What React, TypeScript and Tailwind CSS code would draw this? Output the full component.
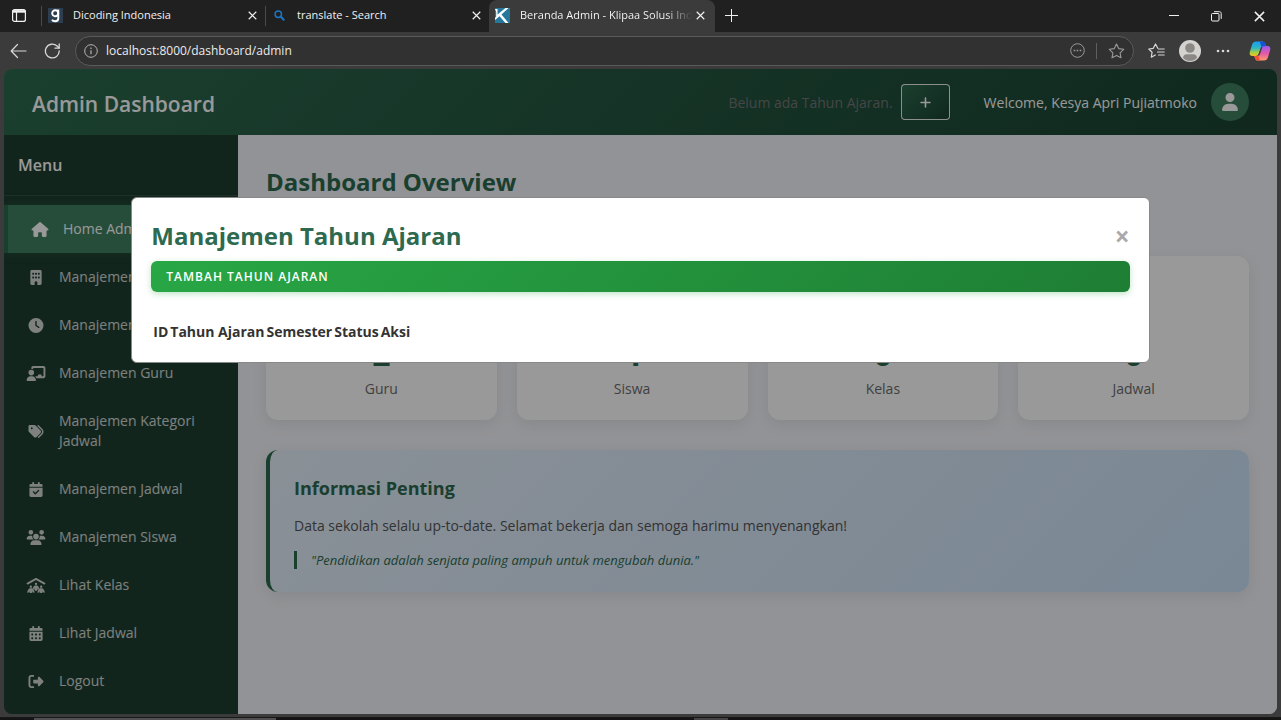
import * as React from "react";
import {
  FaBuilding,
  FaCalendarCheck,
  FaCalendarDays,
  FaChalkboardUser,
  FaClock,
  FaHouse,
  FaPeopleRoof,
  FaPlus,
  FaRightFromBracket,
  FaSchool,
  FaTags,
  FaUser,
  FaUserGraduate,
  FaUsers,
} from "react-icons/fa6";

const navItems = [
  { label: "Home Admin", icon: FaHouse, active: true },
  { label: "Manajemen Kelas", icon: FaBuilding },
  { label: "Manajemen Jam", icon: FaClock },
  { label: "Manajemen Guru", icon: FaChalkboardUser },
  { label: "Manajemen Kategori Jadwal", icon: FaTags },
  { label: "Manajemen Jadwal", icon: FaCalendarCheck },
  { label: "Manajemen Siswa", icon: FaUsers },
  { label: "Lihat Kelas", icon: FaPeopleRoof },
  { label: "Lihat Jadwal", icon: FaCalendarDays },
  { label: "Logout", icon: FaRightFromBracket },
];

const stats = [
  { label: "Guru", value: 2, icon: FaChalkboardUser },
  { label: "Siswa", value: 4, icon: FaUserGraduate },
  { label: "Kelas", value: 0, icon: FaSchool },
  { label: "Jadwal", value: 0, icon: FaCalendarDays },
];

const columns = ["ID", "Tahun Ajaran", "Semester", "Status", "Aksi"];

function CloseGlyph({ size = 9 }: { size?: number }) {
  return (
    <svg width={size} height={size} viewBox="0 0 10 10" fill="none" stroke="currentColor" strokeWidth="1.3">
      <path d="M.8.8l8.4 8.4M9.2.8L.8 9.2" />
    </svg>
  );
}

function DicodingIcon() {
  return (
    <svg width="15" height="15" viewBox="0 0 15 15" fill="none">
      <rect width="15" height="15" fill="#2d3e50" />
      <circle cx="7.200" cy="5.300" r="3" stroke="#fff" strokeWidth="1.900" />
      <path d="M4 11.800c.6 1 1.700 1.500 3.200 1.500 2 0 3.100-1 3.100-3V1.400" stroke="#fff" strokeWidth="1.900" />
    </svg>
  );
}

function SearchIcon() {
  return (
    <svg width="15" height="15" viewBox="0 0 15 15" fill="none" stroke="#1976c5" strokeLinecap="round">
      <circle cx="6.300" cy="6.200" r="3.200" strokeWidth="1.500" />
      <path d="M8.900 8.800l2.800 2.900" strokeWidth="2" />
    </svg>
  );
}

function KlipaaIcon() {
  return (
    <svg width="15" height="15" viewBox="0 0 15 15">
      <rect width="15" height="15" fill="#25789c" />
      <path d="M0 1h2.500v5.500L10.500 0h3L6.500 6.500l7 8.500h-3L4.500 8.300 0 12v-2l1.200-1.500V4z" fill="#fff" />
    </svg>
  );
}

function CopilotIcon() {
  return (
    <svg width="22" height="20" viewBox="0 0 22 20">
      <defs>
        <linearGradient id="copilotLeft" x1="0" y1="0" x2="0" y2="1">
          <stop offset="0" stopColor="#1b9df0" />
          <stop offset=".45" stopColor="#2fb7c4" />
          <stop offset=".75" stopColor="#a8cf45" />
          <stop offset="1" stopColor="#f5c51c" />
        </linearGradient>
        <linearGradient id="copilotRight" x1="0" y1="0" x2="0" y2="1">
          <stop offset="0" stopColor="#9b5cf0" />
          <stop offset=".5" stopColor="#e258a8" />
          <stop offset="1" stopColor="#ff9a6b" />
        </linearGradient>
      </defs>
      <path d="M13 .5c1.700 0 2.700 1 3.200 2.600l.7 2.200h-2.600c-1.600 0-2.300.8-2.700 2.200L9.800 12.600c-.5 1.600-1.500 2.500-3.200 2.500H3.400C1 15.100.2 13.200.8 11L3 3.700C3.700 1.500 5 .5 7 .5z" fill="url(#copilotLeft)" />
      <path d="M9 19.500c-1.700 0-2.600-1-3.100-2.600l-.6-1.800h1.900c1.900 0 2.800-1 3.200-2.500l1.700-5.100c.5-1.600 1.500-2.400 3.200-2.400h3.200c2.400 0 3.300 1.800 2.700 4l-2.200 7.200c-.7 2.200-2 3.200-4 3.200z" fill="url(#copilotRight)" />
      <path d="M13 .5c1.700 0 2.700 1 3.200 2.600l.7 2.200h-2.600c-.8 0-1.400.2-1.900.7L10.800.5z" fill="#1a4fd8" />
      <path d="M9 19.500c-1.700 0-2.600-1-3.100-2.600l-.6-1.800h1.900c.9 0 1.600-.2 2.100-.6l1.600 5z" fill="#f4512f" />
      <path d="M9.500 13.500l2.700-7.500h1.200l-2.600 7.500c-.3.900-.8 1.400-1.600 1.600z" fill="#3b3b3b" />
    </svg>
  );
}

function BrowserTab({
  title,
  icon,
  active = false,
}: {
  title: string;
  icon: React.ReactNode;
  active?: boolean;
}) {
  return (
    <div
      className={
        active
          ? "flex w-[226px] items-center rounded-t-lg bg-[#3b3b3b] pr-2.5 pb-0.5 pl-1.5"
          : "my-1.5 flex w-56 items-center border-l border-[#4a4a4a] pr-2 pb-0.5 pl-1.5"
      }
    >
      {icon}
      <span
        className={
          active
            ? "ml-2.5 flex-1 overflow-hidden bg-linear-to-r from-white from-85% to-transparent bg-clip-text text-[11px] whitespace-nowrap text-transparent"
            : "ml-2.5 flex-1 overflow-hidden text-[11px] whitespace-nowrap"
        }
      >
        {title}
      </span>
      <button aria-label="Close tab" className={active ? "ml-1" : "ml-2"}>
        <CloseGlyph />
      </button>
    </div>
  );
}

function TabStrip() {
  return (
    <div className="flex h-8 items-stretch bg-[#202020] text-[#f0f0f0]">
      <button aria-label="Tab actions" className="flex w-[41px] items-center pb-0.5 pl-3">
        <svg width="14" height="13" viewBox="0 0 14 13" fill="none" stroke="currentColor" strokeWidth="1.200">
          <rect x=".6" y=".6" width="12.800" height="11.800" rx="2" />
          <path d="M.6 2.400h12.800" strokeWidth="2.600" />
          <path d="M4.500 3v9.400" />
        </svg>
      </button>
      <BrowserTab title="Dicoding Indonesia" icon={<DicodingIcon />} />
      <BrowserTab title="translate - Search" icon={<SearchIcon />} />
      <BrowserTab title="Beranda Admin - Klipaa Solusi Ind" icon={<KlipaaIcon />} active />
      <button aria-label="New tab" className="px-2.5 pb-0.5">
        <svg width="13" height="13" viewBox="0 0 13 13" stroke="currentColor">
          <path d="M6.500 0v13M0 6.500h13" />
        </svg>
      </button>
      <div className="ml-auto flex items-center gap-8 pr-4">
        <button aria-label="Minimize">
          <svg width="10" height="10" viewBox="0 0 10 10" stroke="currentColor">
            <path d="M0 4.500h10" />
          </svg>
        </button>
        <button aria-label="Restore">
          <svg width="11" height="11" viewBox="0 0 11 11" fill="none" stroke="currentColor">
            <rect x=".5" y="2.500" width="7.500" height="7.500" rx="1" />
            <path d="M3 .7h5.500c1 0 1.700.7 1.700 1.700v5.500" />
          </svg>
        </button>
        <button aria-label="Close window">
          <CloseGlyph size={11} />
        </button>
      </div>
    </div>
  );
}

function Toolbar() {
  return (
    <div className="flex h-[37px] items-center bg-[#3b3b3b] px-2.5 text-[#d8d8d8]">
      <button aria-label="Back">
        <svg width="17" height="16" viewBox="0 0 17 16" fill="none" stroke="currentColor" strokeWidth="1.200" strokeLinecap="round" strokeLinejoin="round">
          <path d="M7.500 1.500L1.200 8l6.300 6.500M1.200 8H16" />
        </svg>
      </button>
      <button aria-label="Refresh" className="ml-[17px]">
        <svg width="17" height="16" viewBox="0 0 17 16" fill="none" stroke="currentColor" strokeWidth="1.300" strokeLinecap="round" strokeLinejoin="round">
          <path d="M15.200 8A6.900 6.900 0 1 1 12.800 2.800L15 5" />
          <path d="M15.200 1v4.200h-4.200" />
        </svg>
      </button>
      <div className="ml-3.5 flex h-[30px] flex-1 items-center rounded-full border border-[#5a5a5a] bg-[#313131] px-2">
        <svg width="14" height="14" viewBox="0 0 14 14" fill="none" stroke="#b5b5b5">
          <circle cx="7" cy="7" r="6.300" />
          <path d="M7 6.200v4M7 3.500v1.400" strokeWidth="1.200" />
        </svg>
        <input
          aria-label="Address"
          className="ml-2 flex-1 bg-transparent text-xs text-[#ececec] outline-none"
          defaultValue="localhost:8000/dashboard/admin"
        />
        <button aria-label="Page actions">
          <svg width="15" height="15" viewBox="0 0 15 15" fill="none" stroke="#9a9a9a">
            <circle cx="7.500" cy="7.500" r="6.800" />
            <path d="M3.700 7.500h1.600M6.700 7.500h1.600M9.700 7.500h1.600" strokeWidth="1.500" />
          </svg>
        </button>
        <span className="mx-[11px] h-4 w-px bg-[#5f5f5f]" />
        <button aria-label="Favorite">
          <svg width="17" height="16" viewBox="0 0 17 16" fill="none" stroke="#9a9a9a" strokeWidth="1.100" strokeLinejoin="round">
            <path d="M8.500 1l2.200 4.600 5 .7-3.600 3.500.9 5-4.500-2.400L4 14.800l.9-5L1.300 6.300l5-.7z" />
          </svg>
        </button>
      </div>
      <div className="ml-3.5 flex items-center gap-3.5">
        <button aria-label="Favorites">
          <svg width="17" height="16" viewBox="0 0 17 16" fill="none" stroke="currentColor" strokeWidth="1.200" strokeLinejoin="round" strokeLinecap="round">
            <path d="M9.800 5.300L7.500 1 5.300 5.300l-4.500.7 3.300 3.200-.8 5 4-2.200" />
            <path d="M10.500 6h5.700M9.500 9h6.700M10.500 12h5.700" />
          </svg>
        </button>
        <button aria-label="Profile">
          <svg width="22" height="22" viewBox="0 0 22 22">
            <circle cx="11" cy="11" r="11" fill="#d5d3d0" />
            <circle cx="11" cy="8" r="4.800" fill="#8b8885" />
            <path d="M4 17.800c0-2.500 2-3.600 4-3.600h6c2 0 4 1.100 4 3.600-2 2.200-4.300 3.200-7 3.200s-5-1-7-3.200z" fill="#8b8885" />
          </svg>
        </button>
        <button aria-label="Settings">
          <svg width="16" height="4" viewBox="0 0 16 4" fill="currentColor">
            <circle cx="3" cy="2" r="1.300" />
            <circle cx="8" cy="2" r="1.300" />
            <circle cx="13" cy="2" r="1.300" />
          </svg>
        </button>
        <button aria-label="Copilot" className="ml-1">
          <CopilotIcon />
        </button>
      </div>
    </div>
  );
}

function Header() {
  return (
    <header className="flex h-[66px] items-center bg-linear-135 from-[#2d6a4f] to-[#1b4332] px-7 text-white">
      <h1 className="pt-1 text-[21px] leading-8 font-semibold">Admin Dashboard</h1>
      <div className="ml-auto flex items-center">
        <span className="pt-0.5 text-sm text-[#767676]">Belum ada Tahun Ajaran.</span>
        <button
          aria-label="Tambah"
          className="ml-2 flex h-9 w-[49px] items-center justify-center rounded border border-white/90 bg-linear-135 from-[#2d6a4f] to-[#1b4332] text-[13px]"
        >
          <FaPlus />
        </button>
        <span className="ml-[34px] pt-0.5 text-sm">Welcome, Kesya Apri Pujiatmoko</span>
        <span className="ml-3.5 flex size-[38px] items-center justify-center rounded-full bg-[#3f8061] text-lg">
          <FaUser />
        </span>
      </div>
    </header>
  );
}

function Sidebar() {
  return (
    <aside className="w-[234px] shrink-0 bg-[#1e3e30] text-white">
      <h2 className="flex h-[61px] items-center border-b border-white/10 px-3.5 text-base font-semibold">Menu</h2>
      <nav className="mt-[9px]">
        {navItems.map((item) => (
          <a
            key={item.label}
            href="#"
            className={
              item.active
                ? "flex items-center border-l-4 border-[#2d6a4f] bg-[#40805f] py-3.5 pr-5 pl-[22px] shadow-[0_0_8px_rgba(45,106,79,0.5)]"
                : "flex items-center py-3.5 pr-5 pl-[22px] text-white/80"
            }
          >
            <item.icon className="mr-[13px] w-5 shrink-0 text-[15px]" />
            <span className="text-sm leading-5">{item.label}</span>
          </a>
        ))}
      </nav>
    </aside>
  );
}

function Overview() {
  return (
    <main className="flex-1 bg-[#f4f5fa] px-7 pt-7">
      <h2 className="h-[93px] text-2xl leading-[38px] font-bold text-[#2d6a4f]">Dashboard Overview</h2>
      <div className="grid grid-cols-4 gap-5">
        {stats.map((stat) => (
          <div key={stat.label} className="flex flex-col items-center rounded-xl bg-white px-5 pt-7 pb-[19px] shadow-[0_4px_15px_rgba(0,0,0,0.08)]">
            <stat.icon className="mb-[22px] size-7 text-[#2d6a4f]" />
            <span className="text-[32px] leading-10 font-bold text-[#2d6a4f]">{stat.value}</span>
            <span className="mt-[3px] text-sm leading-6 text-[#6c6c6c]">{stat.label}</span>
          </div>
        ))}
      </div>
      <section className="mt-[30px] rounded-xl border-l-4 border-[#2d6a4f] bg-linear-135 from-[#e6f0fb] to-[#cbe2f8] px-6 pt-6 pb-[23px] shadow-[0_4px_15px_rgba(0,0,0,0.08)]">
        <h3 className="text-lg leading-7 font-bold text-[#2d6a4f]">Informasi Penting</h3>
        <p className="mt-3 text-sm leading-6 text-[#555]">
          Data sekolah selalu up-to-date. Selamat bekerja dan semoga harimu menyenangkan!
        </p>
        <blockquote className="mt-[13px] border-l-3 border-[#2d6a4f] pl-3.5 text-[13px] leading-[18px] text-[#2d6a4f] italic">
          "Pendidikan adalah senjata paling ampuh untuk mengubah dunia."
        </blockquote>
      </section>
    </main>
  );
}

function TahunAjaranModal() {
  return (
    <div className="absolute inset-0 bg-black/40 px-[10%] pt-32">
      <div role="dialog" aria-labelledby="modal-title" className="rounded-md border border-[#888] bg-white px-[19px] pt-5 pb-[18px]">
        <div className="flex items-center justify-between">
          <h2 id="modal-title" className="text-2xl leading-9 font-bold text-[#2d6a4f]">
            Manajemen Tahun Ajaran
          </h2>
          <button aria-label="Tutup" className="text-[26px] leading-9 font-bold text-[#aaa]">
            ×
          </button>
        </div>
        <button className="mt-[7px] block w-full rounded-md bg-linear-135 from-[#28a745] to-[#1e7e34] px-[15px] text-left text-xs leading-[31px] font-semibold tracking-[1px] text-white uppercase shadow-[0_2px_6px_rgba(40,167,69,0.3)]">
          Tambah Tahun Ajaran
        </button>
        <table className="mt-7 border-separate border-spacing-x-[2px] text-sm leading-6 text-[#333]">
          <thead>
            <tr>
              {columns.map((col) => (
                <th key={col} className="font-bold">
                  {col}
                </th>
              ))}
            </tr>
          </thead>
          <tbody />
        </table>
      </div>
    </div>
  );
}

export default function App() {
  return (
    <div className="flex min-h-screen flex-col bg-[#3b3b3b] font-['Open_Sans','Noto_Sans',sans-serif]">
      <TabStrip />
      <Toolbar />
      <div className="relative mx-1 flex flex-1 flex-col overflow-hidden rounded-lg">
        <Header />
        <div className="flex flex-1">
          <Sidebar />
          <Overview />
        </div>
        <TahunAjaranModal />
      </div>
      <div className="mt-[3px] flex h-[3px] border-t border-[#181818] bg-[#141414]">
        <span className="ml-[34px] w-[242px] bg-[#505050]" />
        <span className="ml-[418px] w-[34px] bg-[#454545]" />
      </div>
    </div>
  );
}
